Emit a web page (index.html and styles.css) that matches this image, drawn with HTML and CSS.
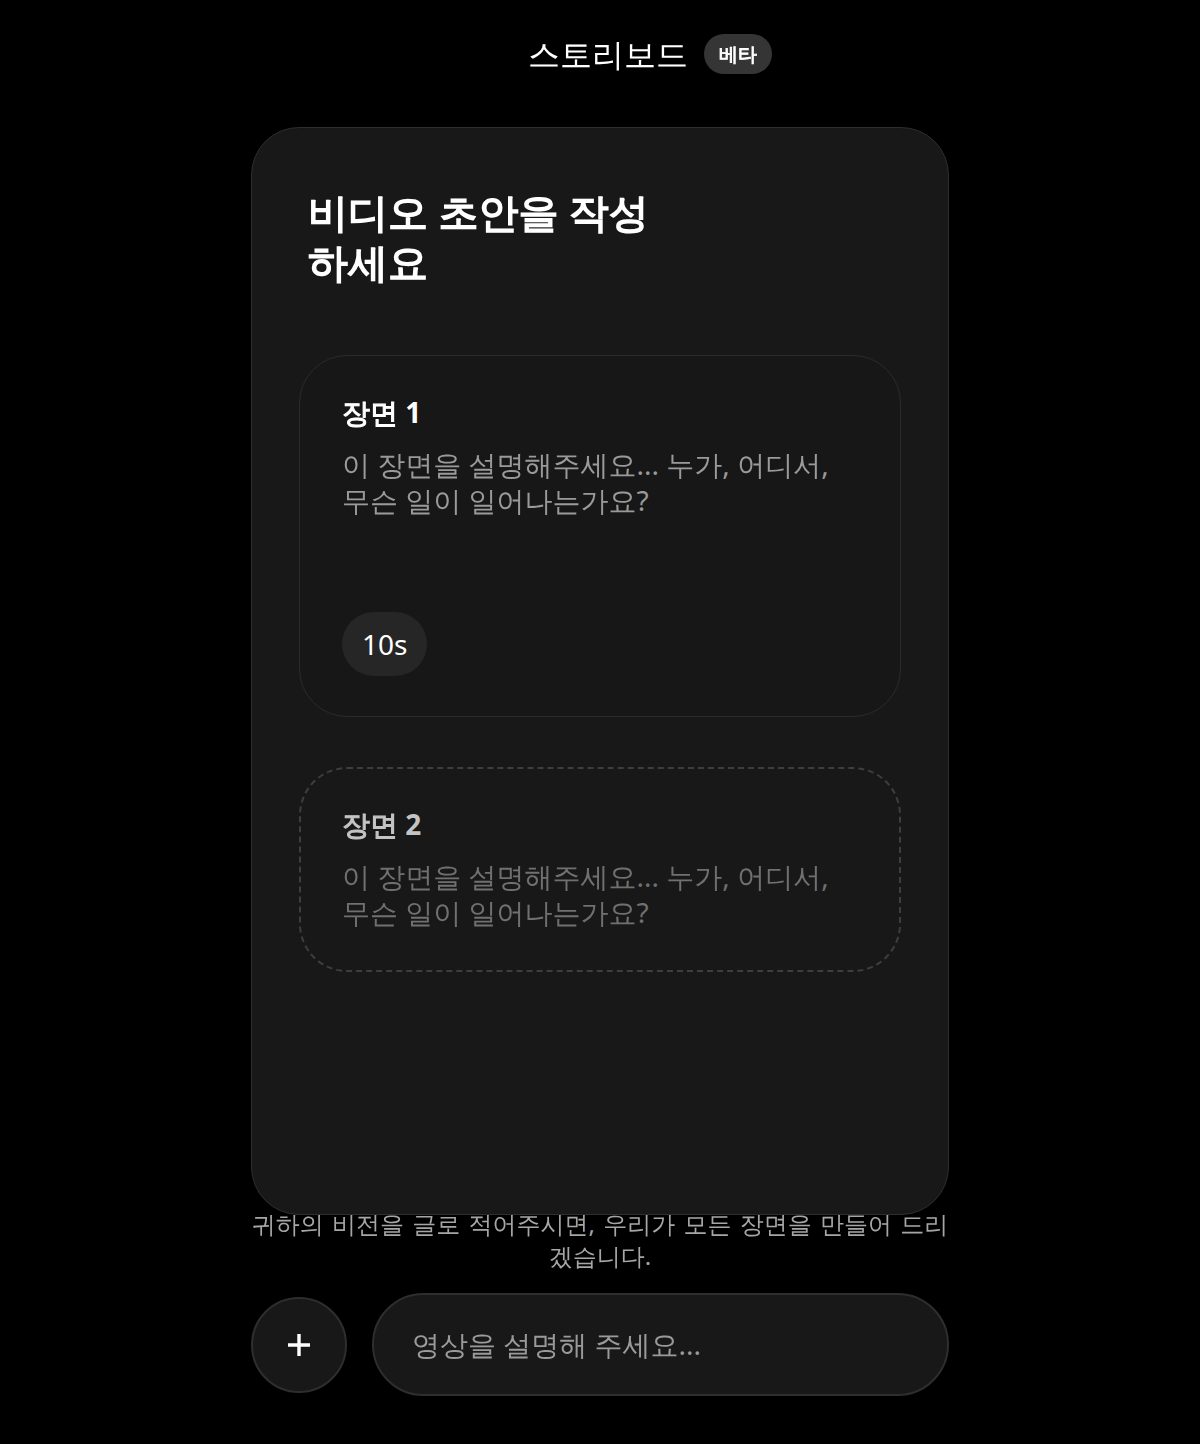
FILE: index.html
```html
<!DOCTYPE html>
<html lang="ko">
<head>
<meta charset="utf-8">
<title>스토리보드</title>
<link rel="stylesheet" href="styles.css">
</head>
<body>
<div class="page">
  <header class="header">
    <div class="brand">
      <h1 class="brand-title">스토리보드</h1>
      <span class="badge">베타</span>
    </div>
  </header>

  <main class="board">
    <h2 class="board-title">비디오 초안을 작성<br>하세요</h2>
    <section class="scene scene-active">
      <h3 class="scene-title">장면 <span class="num">1</span></h3>
      <p class="scene-desc scene-desc-tall">이 장면을 설명해주세요... 누가, 어디서,<br>무슨 일이 일어나는가요?</p>
      <span class="duration">10s</span>
    </section>
    <section class="scene scene-draft">
      <h3 class="scene-title">장면 <span class="num">2</span></h3>
      <p class="scene-desc">이 장면을 설명해주세요... 누가, 어디서,<br>무슨 일이 일어나는가요?</p>
    </section>
  </main>

  <p class="hint">귀하의 비전을 글로 적어주시면, 우리가 모든 장면을 만들어 드리겠습니다.</p>

  <div class="composer">
    <button class="add-btn" aria-label="추가">
      <svg width="24" height="24" viewBox="0 0 24 24" fill="none" stroke="#fff" stroke-width="3.4" stroke-linecap="butt">
        <path d="M12 1v22M1 12h22"/>
      </svg>
    </button>
    <div class="prompt">영상을 설명해 주세요...</div>
  </div>
</div>
</body>
</html>
```

FILE: styles.css
```css
* { box-sizing: border-box; }

html, body {
  margin: 0;
  padding: 0;
  background: #000;
}

body {
  font-family: "Noto Sans", "WenQuanYi Zen Hei", system-ui, sans-serif;
  color: #fff;
}

.page {
  width: 698px;
  margin: 0 auto;
  padding-bottom: 40px;
}

.header {
  height: 127px;
  display: flex;
  justify-content: center;
  padding-top: 28px;
  padding-left: 16px;
}

.brand {
  position: relative;
  height: 52px;
}

.brand-title {
  margin: 0;
  font-size: 32px;
  font-weight: 400;
  line-height: 52px;
  white-space: nowrap;
}

.badge {
  position: absolute;
  left: calc(100% + 16px);
  top: 6px;
  height: 40px;
  padding: 0 15px;
  border-radius: 20px;
  background: #353535;
  font-size: 19px;
  font-weight: 700;
  line-height: 40px;
  white-space: nowrap;
  -webkit-text-stroke: 0.9px #fff;
}

.board {
  height: 1088px;
  background: #181818;
  border: 1px solid #2e2e2e;
  border-radius: 48px;
  padding: 59px 47px 0;
  display: flex;
  flex-direction: column;
  gap: 50px;
}

.board-title {
  margin: 0 0 18px;
  padding-left: 9px;
  font-size: 40px;
  font-weight: 700;
  line-height: 50px;
  -webkit-text-stroke: 1.6px #fff;
}

.scene {
  border-radius: 48px;
  display: flex;
  flex-direction: column;
  align-items: flex-start;
}

.scene-active {
  border: 1px solid #2b2b2b;
  background: #171717;
  padding: 38px 42px 40px;
}

.scene-draft {
  border: 2px dashed #3e3e3e;
  padding: 37px 41px 40px;
}

.scene-title {
  margin: 0 0 16px;
  font-size: 28px;
  font-weight: 700;
  line-height: 36px;
  color: #fff;
  -webkit-text-stroke: 1.1px currentColor;
}

.scene-title .num {
  -webkit-text-stroke: 0;
}

.scene-draft .scene-title {
  color: #c4c4c4;
}

.scene-desc {
  margin: 0;
  font-size: 28px;
  line-height: 36px;
  color: #9a9a9a;
}

.scene-draft .scene-desc {
  color: #707070;
}

.scene-desc-tall {
  min-height: 142px;
  margin-bottom: 24px;
}

.duration {
  height: 64px;
  padding: 0 20px;
  border-radius: 32px;
  background: #262626;
  font-size: 28px;
  line-height: 64px;
  color: #fff;
}

.hint {
  margin: -7px 0 0;
  text-align: center;
  font-size: 24px;
  line-height: 32px;
  word-spacing: 2px;
  color: #a6a6a6;
}

.composer {
  margin-top: 21px;
  display: flex;
  align-items: center;
  gap: 25px;
}

.add-btn {
  flex: 0 0 96px;
  width: 96px;
  height: 96px;
  border-radius: 50%;
  border: 2px solid #2e2e2e;
  background: #181818;
  display: flex;
  align-items: center;
  justify-content: center;
  padding: 0;
}

.prompt {
  flex: 1;
  height: 103px;
  border-radius: 52px;
  border: 2px solid #2e2e2e;
  background: #181818;
  padding-left: 38px;
  display: flex;
  align-items: center;
  font-size: 28px;
  color: #9a9a9a;
}
```
